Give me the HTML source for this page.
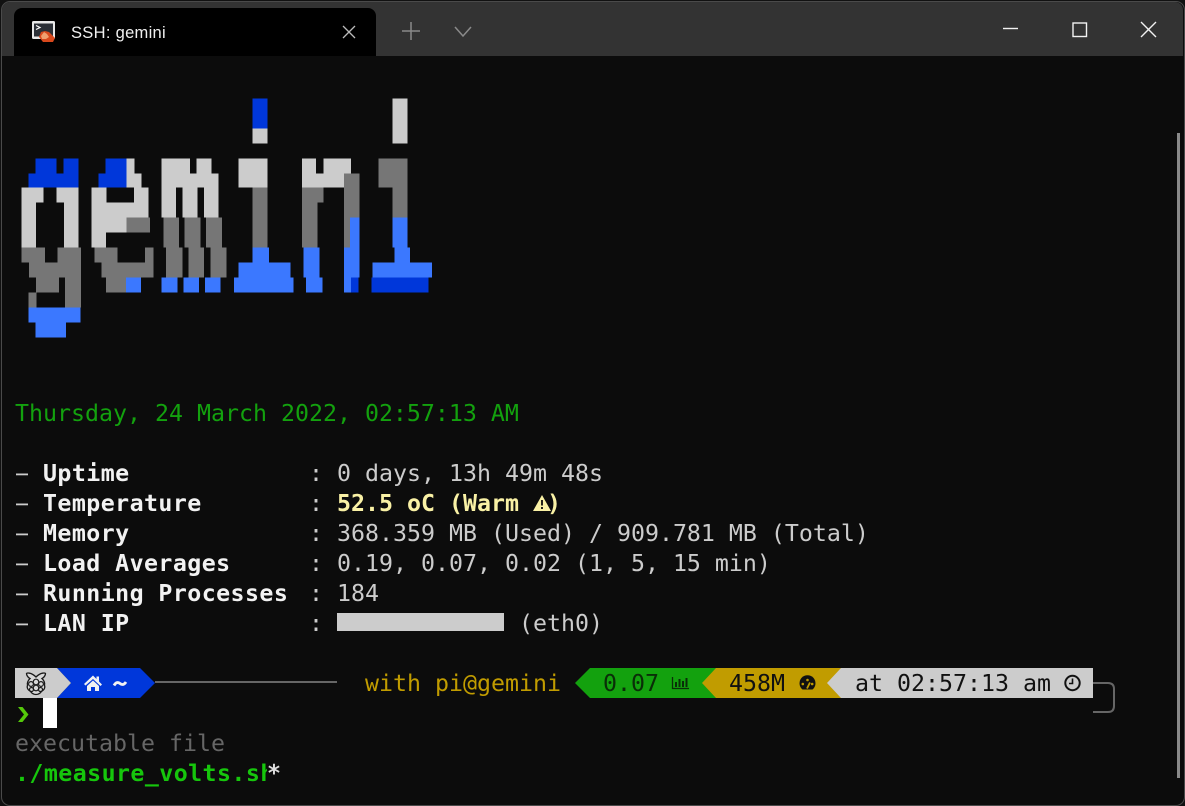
<!DOCTYPE html>
<html><head><meta charset="utf-8"><style>
html,body{margin:0;padding:0;background:#111;width:1185px;height:806px;overflow:hidden}
#win{position:absolute;left:1px;top:1px;width:1182px;height:803px;background:#0c0c0c;border:1px solid #4a4a4a;border-radius:9px;overflow:hidden}
#tab{position:absolute;left:14px;top:8px;width:362px;height:48px;background:#000;border-radius:8px 8px 0 0}
#tt{position:absolute;left:71px;top:23px;font:16.5px/20px "Liberation Sans",sans-serif;color:#f0f0f0;letter-spacing:.3px;white-space:pre}
.r{position:absolute;margin-top:1px;font-family:"DejaVu Sans Mono","Liberation Mono",monospace;font-size:23.25px;line-height:30px;height:30px;white-space:pre;color:#ccc}
b{color:#f2f2f2;font-weight:bold;letter-spacing:.43px}
b.y{color:#f9f1a5;letter-spacing:0}
svg{position:absolute;left:0;top:0}
</style></head><body>
<div id="win"></div>
<div style="position:absolute;left:0;top:0;width:1185px;height:806px;overflow:hidden">
<div style="position:absolute;left:2px;top:2px;width:1181px;height:54px;background:#333;border-radius:8px 8px 0 0"></div>
<div id="tab"></div>
<div id="tt">SSH: gemini</div>

<svg width="1185" height="806" viewBox="0 0 1185 806">
<!-- tab icon -->
<rect x="32" y="21" width="23" height="18" rx="1.5" fill="#e8e8e8"/>
<rect x="34" y="23.500" width="19" height="13" fill="#2b2f36"/>
<path d="M36 25.500l4 2-4 2" fill="none" stroke="#fff" stroke-width="1.200"/>
<path d="M39 37l2-5 4-1 4 1 3 3 3 3-2 4h-10z" fill="#d8481c"/>
<path d="M41 36l3-4 3 2 2 3-3 2h-4z" fill="#f0a070"/>
<!-- tab close, plus, chevron -->
<path d="M343 26l12 12M355 26l-12 12" stroke="#bbb" stroke-width="1.300" fill="none"/>
<path d="M402 31h18M411 22v18" stroke="#8a8a8a" stroke-width="1.500" fill="none"/>
<path d="M455 27l8 9 8-9" stroke="#8a8a8a" stroke-width="1.500" fill="none"/>
<!-- window buttons -->
<path d="M1003 28.500h15" stroke="#f2f2f2" stroke-width="1.400"/>
<rect x="1073" y="23" width="13.500" height="13.500" fill="none" stroke="#f2f2f2" stroke-width="1.400"/>
<path d="M1141 22l15 15M1156 22l-15 15" stroke="#f2f2f2" stroke-width="1.400"/>
<!-- scrollbar -->
<rect x="1177" y="133" width="3" height="645" fill="#8a8a8a"/>

<!-- ascii art 1 -->
<g transform="translate(0,90) scale(.33333)" shape-rendering="crispEdges">
<g fill="#0037da">
<path d="M107 205H170V250H190V205H235V293H85V250H107Z"/>
<path d="M317 205H380V293H295V250H317Z"/>
</g>
<g fill="#cccccc">
<path d="M65 293H130V338H108V473H65Z"/>
<path d="M170 293H235V473H192V338H170Z"/>
<path d="M380 205H403V250H425V293H380Z"/>
<path d="M275 293H320V338H402V293H445V383H380V428H318V473H275Z"/>
<path d="M485 205H570V250H590V205H635V250H655V383H612V293H592V383H548V293H528V383H485Z"/>
</g>
<g fill="#767676">
<path d="M65 473H135V518H173V473H243V653H195V608H110V653H85V608H108V563H87V518H65Z"/>
<path d="M177 563H195V608H177Z" fill="#0c0c0c"/>
<path d="M380 383H450V428H380Z"/>
<path d="M283 473H353V518H435V473H460V563H378V608H318V563H305V518H283Z"/>
<rect x="490" y="383" width="47" height="90"/><rect x="498" y="473" width="49" height="90"/>
<rect x="553" y="383" width="48" height="90"/><rect x="565" y="473" width="47" height="90"/>
<rect x="618" y="383" width="48" height="90"/><rect x="632" y="473" width="48" height="90"/>
</g>
<g fill="#3b78ff">
<path d="M85 653H241V698H198V743H107V698H85Z"/>
<rect x="378" y="563" width="45" height="45"/>
<rect x="485" y="563" width="47" height="45"/><rect x="550" y="563" width="47" height="45"/><rect x="615" y="563" width="47" height="45"/>
</g>
</g>
<!-- ascii art 2 -->
<g transform="translate(225,90) scale(.33333)" shape-rendering="crispEdges">
<rect x="82" y="25" width="45" height="90" fill="#0037da"/>
<rect x="82" y="115" width="45" height="45" fill="#ccc"/>
<rect x="40" y="205" width="87" height="88" fill="#ccc"/>
<rect x="82" y="293" width="45" height="180" fill="#767676"/>
<path d="M82 473H132V518H197V563H205V608H27V563H40V518H82Z" fill="#3b78ff"/>
<path d="M231 205H273V250H295V205H378V293H231Z" fill="#ccc"/>
<path d="M231 293H295V338H278V473H231Z" fill="#767676"/>
<path d="M357 250H403V383H375V473H357Z" fill="#767676"/>
<rect x="375" y="383" width="28" height="90" fill="#3b78ff"/>
<path d="M235 473H283V563H292V608H243V563H235Z" fill="#3b78ff"/>
<path d="M357 473H404V563H378V608H357Z" fill="#3b78ff"/>
<rect x="378" y="563" width="22" height="45" fill="#0037da"/>
<rect x="503" y="25" width="44" height="135" fill="#ccc"/>
<path d="M460 205H547V383H503V293H460Z" fill="#767676"/>
<path d="M503 383H547V473H555V518H621V563H443V518H508V473H503Z" fill="#3b78ff"/>
<rect x="440" y="563" width="170" height="45" fill="#0037da"/>
</g>

<!-- dashes -->
<g fill="#ccc">
<rect x="16" y="473.500" width="12" height="1.800"/>
<rect x="16" y="503.500" width="12" height="1.800"/>
<rect x="16" y="533.500" width="12" height="1.800"/>
<rect x="16" y="563.500" width="12" height="1.800"/>
<rect x="16" y="593.500" width="12" height="1.800"/>
<rect x="16" y="623.500" width="12" height="1.800"/>
</g>

<!-- redacted ip -->
<rect x="337" y="613" width="167" height="18" fill="#ccc"/>

<!-- powerline -->
<rect x="15" y="668" width="42" height="30" fill="#ccc"/>
<path d="M57 668H140L155 683L140 698H57L71 683Z" fill="#0037da"/>
<path d="M57 668L71 683L57 698Z" fill="#ccc"/>
<rect x="155" y="681" width="182" height="2" fill="#666"/>
<path d="M590 668H716V698H590L575 683Z" fill="#13a10e"/>
<path d="M716 668H841V698H716L702 683Z" fill="#c19c00"/>
<path d="M841 668H1093V698H841L827 683Z" fill="#ccc"/>
<path d="M1093 683H1108Q1114 683 1114 689V706Q1114 712 1108 712H1093" fill="none" stroke="#666" stroke-width="2"/>

<!-- raspberry -->
<path d="M36 677c-5-5-9-4-9.500-3.500 0 1 1 4 3.500 5-2 2-3 4-2.500 6.500-1 3 .5 5 3 6.500 1.500 2 3.500 3 5.500 3s4-1 5.500-3c2.500-1.500 4-3.500 3-6.500.5-2.500-.5-4.500-2.500-6.500 2.500-1 3.500-4 3.500-5-.5-.5-4.500-1.500-9.500 3.500Z" fill="#d8d8d8" stroke="#1a1a1a" stroke-width="1.300"/>
<g fill="none" stroke="#1a1a1a" stroke-width="1.200">
<circle cx="36" cy="682" r="2.800"/><circle cx="31" cy="684" r="2.400"/><circle cx="41" cy="684" r="2.400"/>
<circle cx="36" cy="688" r="2.800"/><circle cx="31.500" cy="689.500" r="2"/><circle cx="40.500" cy="689.500" r="2"/>
</g>
<!-- home -->
<path d="M84 684L93 675.500L96.500 679V676.500H99V681.500L102 684.500L100.500 686L93 679L85.500 685.500Z" fill="#f2f2f2"/>
<path d="M87 686L93 680.500L99 686V691H95V687H91V691H87Z" fill="#f2f2f2"/>
<!-- tilde -->
<path d="M114 685.500c2-3.500 4-3.500 6-2s4 1.500 6-1.500" fill="none" stroke="#f2f2f2" stroke-width="2.800"/>
<!-- bars -->
<path d="M672.500 677v11.500H689" fill="none" stroke="#0a2e08" stroke-width="1.300"/>
<path d="M676 682v5M679.500 679v8M683 681v6M686.500 678v9" stroke="#0a2e08" stroke-width="2"/>
<!-- gauge -->
<path d="M802.500 690.500a8 8 0 1 1 10 0Z" fill="#111" transform="translate(0,-1)"/>
<circle cx="802.800" cy="684" r="1.300" fill="#c19c00"/><circle cx="807.500" cy="680" r="1.300" fill="#c19c00"/><circle cx="812.200" cy="684" r="1.300" fill="#c19c00"/>
<path d="M807 688.500l3-6" stroke="#c19c00" stroke-width="1.800"/>
<!-- clock -->
<circle cx="1072.500" cy="683" r="7.200" fill="none" stroke="#111" stroke-width="2"/>
<path d="M1072.500 678.500v5h-3.500" fill="none" stroke="#111" stroke-width="1.600"/>
<!-- warning -->
<path d="M542 495L551 511H533Z" fill="#f9f1a5"/>
<path d="M542 500v5.500M542 507v2" stroke="#0c0c0c" stroke-width="1.800"/>
<!-- prompt chevron -->
<path d="M18 707L24 714.500L18 722H22.500L28.500 714.500L22.500 707Z" fill="#54c90a"/>
<!-- cursor -->
<rect x="43" y="698" width="14" height="30" fill="#fff"/>
</svg>

<div class="r" style="left:15px;top:398px;color:#13a10e">Thursday, 24 March 2022, 02:57:13 AM</div>

<div class="r" style="left:43px;top:458px"><b>Uptime</b></div>
<div class="r" style="left:309px;top:458px">: 0 days, 13h 49m 48s</div>
<div class="r" style="left:43px;top:488px"><b>Temperature</b></div>
<div class="r" style="left:309px;top:488px">: <b class="y">52.5 oC (Warm  )</b></div>
<div class="r" style="left:43px;top:518px"><b>Memory</b></div>
<div class="r" style="left:309px;top:518px">: 368.359 MB (Used) / 909.781 MB (Total)</div>
<div class="r" style="left:43px;top:548px"><b>Load Averages</b></div>
<div class="r" style="left:309px;top:548px">: 0.19, 0.07, 0.02 (1, 5, 15 min)</div>
<div class="r" style="left:43px;top:578px"><b>Running Processes</b></div>
<div class="r" style="left:309px;top:578px">: 184</div>
<div class="r" style="left:43px;top:608px"><b>LAN IP</b></div>
<div class="r" style="left:309px;top:608px">:</div>
<div class="r" style="left:519px;top:608px">(eth0)</div>

<div class="r" style="left:365px;top:668px;color:#c19c00">with pi@gemini</div>
<div class="r" style="left:603px;top:668px;color:#0a2e08">0.07</div>
<div class="r" style="left:729px;top:668px;color:#111">458M</div>
<div class="r" style="left:855px;top:668px;color:#111">at 02:57:13 am</div>

<div class="r" style="left:15px;top:728px;color:#666">executable file</div>
<div class="r" style="left:15px;top:758px;width:252px;overflow:hidden"><b style="color:#16c60c">./measure_volts.sh</b></div>
<div class="r" style="left:267px;top:758px;color:#ddd;font-weight:bold">*</div>
</div>
</body></html>
